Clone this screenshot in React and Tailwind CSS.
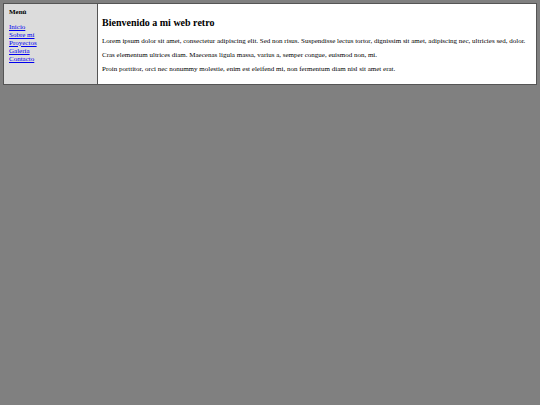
const links = ["Inicio", "Sobre mí", "Proyectos", "Galería", "Contacto"];

const paragraphs = [
  "Lorem ipsum dolor sit amet, consectetur adipiscing elit. Sed non risus. Suspendisse lectus tortor, dignissim sit amet, adipiscing nec, ultricies sed, dolor.",
  "Cras elementum ultrices diam. Maecenas ligula massa, varius a, semper congue, euismod non, mi.",
  "Proin porttitor, orci nec nonummy molestie, enim est eleifend mi, non fermentum diam nisl sit amet erat.",
];

export default function App() {
  return (
    <div className="min-h-screen bg-[#808080] px-[3px] pt-[3px] font-['Liberation_Serif',serif] text-[7px] leading-[8px] text-black">
      <div className="flex border border-[#555555] bg-white">
        <nav aria-labelledby="menu-title" className="w-[94px] shrink-0 border-r border-[#555555] bg-[#dcdcdc] px-[5px] pt-1">
          <h2 id="menu-title" className="mb-[7px] font-bold">Menú</h2>
          <ul>
            {links.map((label) => (
              <li key={label}>
                <a href="#" className="text-[#0000ee] underline">{label}</a>
              </li>
            ))}
          </ul>
        </nav>
        <main className="min-w-0 flex-1 px-1 pt-[13px] pb-[11px]">
          <h1 className="mb-2 text-[10px] leading-[12px] font-bold">Bienvenido a mi web retro</h1>
          <div className="flex flex-col gap-[6px]">
            {paragraphs.map((text) => (
              <p key={text}>{text}</p>
            ))}
          </div>
        </main>
      </div>
    </div>
  );
}
